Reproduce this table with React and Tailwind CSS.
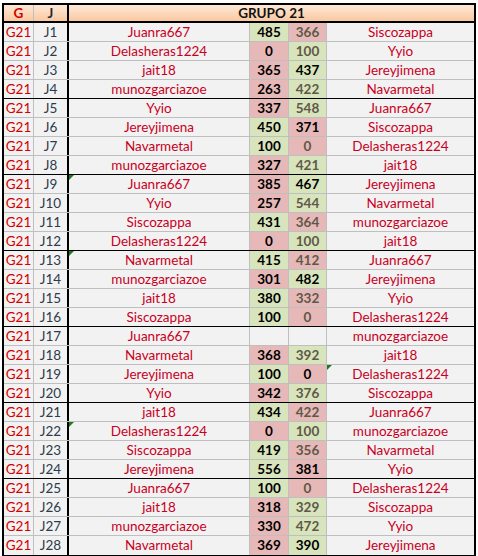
import React from 'react';

// [jornada, local, score local, score visitante, visitante, right text dark, flag left, flag right]
const rows = [
  ['J1', 'Juanra667', 485, 366, 'Siscozappa', false],
  ['J2', 'Delasheras1224', 0, 100, 'Yyio', false],
  ['J3', 'jait18', 365, 437, 'Jereyjimena', true],
  ['J4', 'munozgarciazoe', 263, 422, 'Navarmetal', false],
  ['J5', 'Yyio', 337, 548, 'Juanra667', false],
  ['J6', 'Jereyjimena', 450, 371, 'Siscozappa', true],
  ['J7', 'Navarmetal', 100, 0, 'Delasheras1224', false],
  ['J8', 'munozgarciazoe', 327, 421, 'jait18', false],
  ['J9', 'Juanra667', 385, 467, 'Jereyjimena', true, true],
  ['J10', 'Yyio', 257, 544, 'Navarmetal', false],
  ['J11', 'Siscozappa', 431, 364, 'munozgarciazoe', false],
  ['J12', 'Delasheras1224', 0, 100, 'jait18', false],
  ['J13', 'Navarmetal', 415, 412, 'Juanra667', false, true],
  ['J14', 'munozgarciazoe', 301, 482, 'Jereyjimena', true],
  ['J15', 'jait18', 380, 332, 'Yyio', false],
  ['J16', 'Siscozappa', 100, 0, 'Delasheras1224', false],
  ['J17', 'Juanra667', null, null, 'munozgarciazoe', false],
  ['J18', 'Navarmetal', 368, 392, 'jait18', false],
  ['J19', 'Jereyjimena', 100, 0, 'Delasheras1224', true, false, true],
  ['J20', 'Yyio', 342, 376, 'Siscozappa', false],
  ['J21', 'jait18', 434, 422, 'Juanra667', false],
  ['J22', 'Delasheras1224', 0, 100, 'munozgarciazoe', false, true],
  ['J23', 'Siscozappa', 419, 356, 'Navarmetal', false],
  ['J24', 'Jereyjimena', 556, 381, 'Yyio', true],
  ['J25', 'Juanra667', 100, 0, 'Delasheras1224', false],
  ['J26', 'jait18', 318, 329, 'Siscozappa', false],
  ['J27', 'munozgarciazoe', 330, 472, 'Yyio', false],
  ['J28', 'Navarmetal', 369, 390, 'Jereyjimena', true],
];

const Flag = () => (
  <span className="absolute left-0 top-0 w-0 h-0 border-t-[5px] border-r-[5px] border-t-[#1e7b1e] border-r-transparent" />
);

const scoreBg = (mine, other) => {
  if (mine === null) return 'bg-[#f2f2f2]';
  return mine > other ? 'bg-[#d8e4bc]' : 'bg-[#e6b8b7]';
};

export default function App() {
  return (
    <div className="min-h-screen bg-white pt-[3px] pl-[2px] font-['Lato',sans-serif]">
      <div className="w-[474px] border-2 border-black bg-[#f2f2f2]">
        {/* cabecera */}
        <div className="flex h-[18px] border-b-2 border-black bg-gradient-to-b from-[#fde9d9] to-[#fac8a0] text-[13.5px] font-bold leading-[16px]">
          <div className="w-[30px] border-r border-[#bfbfbf] text-center text-[#d00000]">G</div>
          <div className="w-[35px] border-r-2 border-black text-center text-[#1f2a36]">J</div>
          <div className="flex-1 text-center text-[#111]">GRUPO 21</div>
        </div>

        {rows.map((r, i) => {
          const [j, home, s1, s2, away, dark, flagL, flagR] = r;
          const last = i === rows.length - 1;
          const groupEnd = (i + 1) % 4 === 0;
          const rowBorder = last ? '' : groupEnd ? 'border-b border-black' : 'border-b border-[#bfbfbf]';
          return (
            <div key={j} className={`flex h-[19px] text-[13.5px] leading-[18px] ${last ? 'h-[18px]' : ''} ${rowBorder}`}>
              <div className="w-[30px] border-r border-[#bfbfbf] text-center text-[#d40000]">G21</div>
              <div className="w-[35px] border-r-2 border-black text-center text-[#2e3b4a]">{j}</div>
              <div className="relative w-[181px] border-r border-[#bfbfbf] text-center text-[#c8001e]">
                {flagL && <Flag />}
                {home}
              </div>
              <div className={`w-[39px] border-r border-[#bfbfbf] text-center font-bold text-black ${scoreBg(s1, s2)}`}>
                {s1}
              </div>
              <div className={`w-[38px] border-r border-[#bfbfbf] text-center font-bold ${dark ? 'text-black' : 'text-[#5f5848]'} ${scoreBg(s2, s1)}`}>
                {s2}
              </div>
              <div className="relative flex-1 text-center text-[#c8001e]">
                {flagR && <Flag />}
                {away}
              </div>
            </div>
          );
        })}
      </div>
    </div>
  );
}
